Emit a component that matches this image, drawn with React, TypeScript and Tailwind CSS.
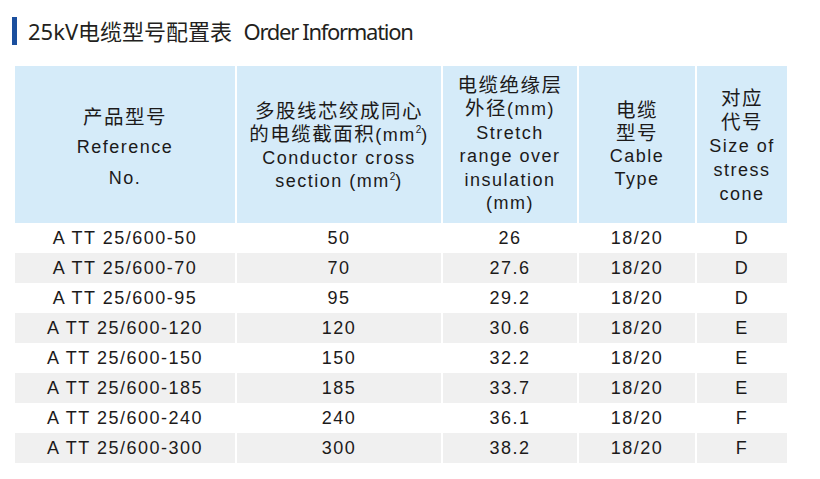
import React from "react";

const rows = [
  ["A TT 25/600-50", "50", "26", "18/20", "D"],
  ["A TT 25/600-70", "70", "27.6", "18/20", "D"],
  ["A TT 25/600-95", "95", "29.2", "18/20", "D"],
  ["A TT 25/600-120", "120", "30.6", "18/20", "E"],
  ["A TT 25/600-150", "150", "32.2", "18/20", "E"],
  ["A TT 25/600-185", "185", "33.7", "18/20", "E"],
  ["A TT 25/600-240", "240", "36.1", "18/20", "F"],
  ["A TT 25/600-300", "300", "38.2", "18/20", "F"],
];

const Zh = ({ children }: { children: React.ReactNode }) => (
  <span className="text-[19.5px]">{children}</span>
);

const Sup = () => (
  <span className="inline-block align-top text-[10px] leading-[10px] relative top-[2px] tracking-normal">2</span>
);

export default function App() {
  return (
    <div
      className="w-[820px] h-[479px] bg-white text-[#1c1a1a] overflow-hidden"
      style={{ fontFamily: '"Liberation Sans", Arial, "Noto Sans CJK SC", sans-serif' }}
    >
      <div className="flex items-center pl-[12px] pt-[17px] h-[45px]">
        <div className="w-[5px] h-[28px] bg-[#1b4f9e]" />
        <div
          className="ml-[11px] text-[22px] leading-[28px] text-[#231f20] whitespace-pre"
          style={{ fontFamily: '"Noto Sans", "Noto Sans CJK SC", sans-serif' }}
        >
          25kV电缆型号配置表  <span className="tracking-[-1.3px]">Order Information</span>
        </div>
      </div>

      <div className="ml-[15px] mt-[21px] w-[772px] grid grid-cols-[220px_204px_134px_116px_90px] gap-x-[2px] text-[18px] tracking-[1.5px] text-center">
        <div className="h-[157px] bg-[#d5ebf9] flex flex-col items-center justify-center leading-[30.5px] pt-[6px]">
          <Zh>产品型号</Zh>
          <span>Reference</span>
          <span>No.</span>
        </div>
        <div className="h-[157px] bg-[#d5ebf9] flex flex-col items-center justify-center leading-[23px] pt-[3px]">
          <Zh>多股线芯绞成同心</Zh>
          <span>
            <Zh>的电缆截面积</Zh>(mm<Sup />)
          </span>
          <span>Conductor cross</span>
          <span>
            section (mm<Sup />)
          </span>
        </div>
        <div className="h-[157px] bg-[#d5ebf9] flex flex-col items-center justify-center leading-[23.5px]">
          <Zh>电缆绝缘层</Zh>
          <span>
            <Zh>外径</Zh>(mm)
          </span>
          <span>Stretch</span>
          <span>range over</span>
          <span>insulation</span>
          <span>(mm)</span>
        </div>
        <div className="h-[157px] bg-[#d5ebf9] flex flex-col items-center justify-center leading-[23px]">
          <Zh>电缆</Zh>
          <Zh>型号</Zh>
          <span>Cable</span>
          <span>Type</span>
        </div>
        <div className="h-[157px] bg-[#d5ebf9] flex flex-col items-center justify-center leading-[24px] pt-[2px]">
          <Zh>对应</Zh>
          <Zh>代号</Zh>
          <span>Size of</span>
          <span>stress</span>
          <span>cone</span>
        </div>

        {rows.map((r, i) =>
          r.map((c, j) => (
            <div
              key={`${i}-${j}`}
              className={`h-[30px] flex items-center justify-center leading-[30px] ${
                i % 2 === 1 ? "bg-[#f0f0f0]" : "bg-white"
              }`}
            >
              {c}
            </div>
          ))
        )}
      </div>
    </div>
  );
}
